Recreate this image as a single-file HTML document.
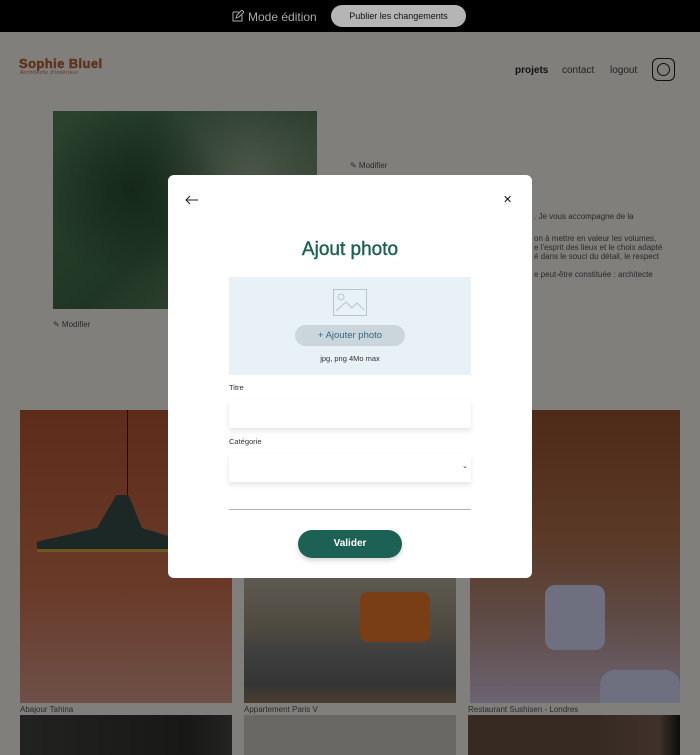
<!DOCTYPE html>
<html><head><meta charset="utf-8"><style>
*{margin:0;padding:0;box-sizing:border-box}
body{width:700px;height:753px;overflow:hidden;background:#807f7c;font-family:"Liberation Sans",sans-serif;position:relative}
.a{position:absolute}
.t{font-size:8px;color:#2a2a2a;white-space:nowrap}
</style></head><body>
<div class="a" style="left:0;top:0;width:700px;height:32px;background:#000"></div>
<svg class="a" style="left:232px;top:10px" width="12" height="12" viewBox="0 0 12 12"><path d="M1 2h6M1 2v9h9V5M4 8l1-3 5-5 2 2-5 5z" fill="none" stroke="#aaa" stroke-width="1"/></svg>
<div class="a" style="left:248px;top:10px;font-size:12px;color:#aaa">Mode édition</div>
<div class="a" style="left:331px;top:5px;width:135px;height:22px;border-radius:11px;background:#b5b5b5;font-size:9px;color:#111;text-align:center;line-height:22px">Publier les changements</div>
<div class="a" style="left:19px;top:57px;font-size:13px;line-height:13px;font-weight:900;color:#62331c;letter-spacing:0.4px;-webkit-text-stroke:0.5px #62331c">Sophie Bluel</div>
<div class="a" style="left:20px;top:70px;font-size:5.5px;line-height:6px;color:#62331c;letter-spacing:0.4px">Architecte d'intérieur</div>
<div class="a" style="left:515px;top:65px;font-size:10px;color:#111;font-weight:bold">projets</div>
<div class="a" style="left:562px;top:65px;font-size:10px;color:#222">contact</div>
<div class="a" style="left:610px;top:65px;font-size:10px;color:#222">logout</div>
<div class="a" style="left:652px;top:58px;width:23px;height:23px;border:1.5px solid #111;border-radius:6px"></div>
<div class="a" style="left:657px;top:63px;width:13px;height:13px;border:1.3px solid #111;border-radius:50%"></div>
<div class="a" style="left:53px;top:111px;width:264px;height:198px;background:radial-gradient(circle at 30% 40%,#15281a,transparent 40%),radial-gradient(circle at 75% 30%,#4a5548,transparent 45%),linear-gradient(135deg,#2c4330,#203624 50%,#454f40)"></div>
<div class="a t" style="left:53px;top:320px">✎ Modifier</div>
<div class="a t" style="left:350px;top:161px">✎ Modifier</div>
<div class="a t" style="left:534px;top:212px">. Je vous accompagne de la</div>
<div class="a t" style="left:534px;top:234px;line-height:9px">on à mettre en valeur les volumes,<br>e l'esprit des lieux et le choix adapté<br>é dans le souci du détail, le respect</div>
<div class="a t" style="left:534px;top:270px">e peut-être constituée : architecte</div>
<div class="a" style="left:20px;top:410px;width:212px;height:293px;background:linear-gradient(180deg,#5e2c1a,#6a3a28 60%,#6e5048)"></div>
<div class="a" style="left:127px;top:410px;width:1px;height:90px;background:#111"></div>
<div class="a" style="left:37px;top:495px;width:150px;height:60px;background:#1b2826;clip-path:polygon(0 78%,40% 55%,53% 0,61% 0,70% 55%,100% 78%,100% 90%,0 90%)"></div>
<div class="a" style="left:37px;top:549px;width:140px;height:3px;background:#6a5a20"></div>
<div class="a" style="left:244px;top:578px;width:212px;height:125px;background:linear-gradient(180deg,#5e5a52 0%,#4f4a40 40%,#3f3f3f 60%,#353535 85%,#4a3d2e 100%)"></div>
<div class="a" style="left:360px;top:592px;width:70px;height:50px;background:#7a3e16;border-radius:8px"></div>
<div class="a" style="left:470px;top:410px;width:210px;height:293px;background:linear-gradient(180deg,#4e2a18,#5c3a28 45%,#5e4a44 70%,#6c6472)"></div>
<div class="a" style="left:545px;top:585px;width:60px;height:65px;background:#6e7080;border-radius:10px"></div>
<div class="a" style="left:600px;top:670px;width:80px;height:33px;background:#6e7080;border-radius:15px 15px 0 0"></div>
<div class="a t" style="left:20px;top:705px">Abajour Tahina</div>
<div class="a t" style="left:244px;top:705px">Appartement Paris V</div>
<div class="a t" style="left:468px;top:705px">Restaurant Sushisen - Londres</div>
<div class="a" style="left:20px;top:715px;width:212px;height:40px;background:linear-gradient(90deg,#222220,#181817 80%,#242422)"></div>
<div class="a" style="left:244px;top:715px;width:212px;height:40px;background:#6a6864"></div>
<div class="a" style="left:468px;top:715px;width:212px;height:40px;background:linear-gradient(90deg,#362a22 60%,#40322a 90%,#0c0c0c)"></div>

<div class="a" style="left:168px;top:175px;width:364px;height:403px;background:#fff;border-radius:6px"></div>
<svg class="a" style="left:185px;top:195px" width="14" height="10" viewBox="0 0 14 10"><path d="M13 5H1M5 1L1 5l4 4" fill="none" stroke="#222" stroke-width="1"/></svg>
<div class="a" style="left:503px;top:193px;font-size:11px;color:#111">✕</div>
<div class="a" style="left:168px;top:239px;width:364px;text-align:center;font-size:19px;color:#1d6154;-webkit-text-stroke:0.4px #1d6154">Ajout photo</div>
<div class="a" style="left:229px;top:277px;width:242px;height:98px;background:#e8f1f6"></div>
<svg class="a" style="left:333px;top:289px" width="34" height="27" viewBox="0 0 34 27"><rect x="0.5" y="0.5" width="33" height="26" fill="none" stroke="#b9c5cc"/><circle cx="8" cy="8" r="3" fill="none" stroke="#b9c5cc"/><path d="M3 22l10-9 6 6 5-5 7 7" fill="none" stroke="#b9c5cc"/></svg>
<div class="a" style="left:295px;top:325px;width:110px;height:21px;border-radius:11px;background:#cbd6dc;color:#306685;font-size:9.5px;text-align:center;line-height:21px">+ Ajouter photo</div>
<div class="a" style="left:229px;top:354px;width:242px;text-align:center;font-size:7.5px;color:#333">jpg, png 4Mo max</div>
<div class="a" style="left:229px;top:383px;font-size:7.5px;color:#333">Titre</div>
<div class="a" style="left:229px;top:400px;width:242px;height:28px;background:#fff;box-shadow:0 3px 5px rgba(0,0,0,0.1)"></div>
<div class="a" style="left:229px;top:437px;font-size:7.5px;color:#333">Catégorie</div>
<div class="a" style="left:229px;top:454px;width:242px;height:28px;background:#fff;box-shadow:0 3px 5px rgba(0,0,0,0.1)"></div>
<div class="a" style="left:462px;top:462px;font-size:7px;color:#333">⌄</div>
<div class="a" style="left:229px;top:509px;width:242px;height:1px;background:#b3b3b3"></div>
<div class="a" style="left:298px;top:530px;width:104px;height:28px;border-radius:14px;background:#1d6154;color:#fff;font-weight:bold;font-size:10px;text-align:center;line-height:28px;box-shadow:0 3px 5px rgba(0,0,0,0.15)">Valider</div>
</body></html>
